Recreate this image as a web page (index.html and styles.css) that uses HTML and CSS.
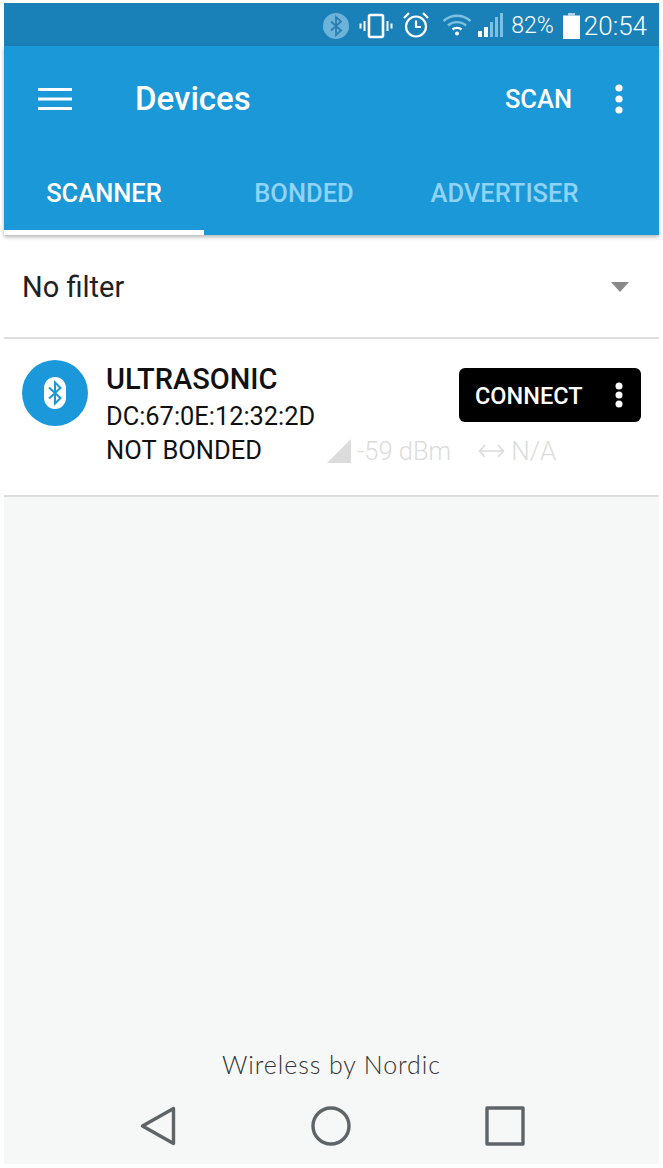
FILE: index.html
```html
<!DOCTYPE html>
<html lang="en">
<head>
<meta charset="utf-8">
<title>Devices</title>
<link rel="stylesheet" href="styles.css">
</head>
<body>
<div class="phone">
  <div class="status">
    <svg class="st-bt" viewBox="0 0 26 26"><circle cx="13" cy="13" r="13" fill="#6cb3d9"/><path d="M8 8.500l10 9-5 4.500V4l5 4.500-10 9" fill="none" stroke="#2a7fb0" stroke-width="1.800"/></svg>
    <svg class="st-vib" viewBox="0 0 34 26"><rect x="10" y="2" width="14" height="22" rx="1.500" fill="none" stroke="#fff" stroke-width="2.600"/><path d="M5.500 8v10M1.500 10.500v5M28.500 8v10M32.500 10.500v5" stroke="#fff" stroke-width="2"/></svg>
    <svg class="st-alarm" viewBox="0 0 28 28"><circle cx="14" cy="15.500" r="10" fill="none" stroke="#fff" stroke-width="2.200"/><path d="M14 9.500v6.500h5M2 7l5-5M26 7l-5-5" fill="none" stroke="#fff" stroke-width="2.200"/></svg>
    <svg class="st-wifi" viewBox="0 0 30 24"><g fill="none" stroke="#7cc0e3" stroke-width="2.400"><path d="M1.500 9C9 2 21 2 28.500 9"/><path d="M6 13.500c5-4.500 13-4.500 18 0"/></g><path d="M10.500 17.500c2.500-2.200 6.500-2.200 9 0" fill="none" stroke="#fff" stroke-width="2.400"/><circle cx="15" cy="21.500" r="2" fill="#fff"/></svg>
    <svg class="st-sig" viewBox="0 0 26 26"><path d="M1 19h4v6H1zM7 15h4v10H7z" fill="#fff"/><path d="M13 10h3v15h-3zM18 5h3v20h-3zM23 1h3v24h-3z" fill="#7cc0e3"/></svg>
    <span class="st-text st-pct">82%</span>
    <svg class="st-batt" viewBox="0 0 17 26"><path d="M5 0h7v2.500H5z" fill="#a9d3ea"/><path d="M0 2.500h17V26H0z" fill="#fff"/></svg>
    <span class="st-text st-time">20:54</span>
  </div>
  <header class="toolbar">
    <div class="bar">
      <svg class="menu" viewBox="0 0 34 24"><path d="M0 2.500h34M0 12h34M0 21.500h34" stroke="#fff" stroke-width="3"/></svg>
      <h1 class="title">Devices</h1>
      <span class="scan">SCAN</span>
      <svg class="dots" viewBox="0 0 8 30"><circle cx="4" cy="4" r="3.600"/><circle cx="4" cy="15" r="3.600"/><circle cx="4" cy="26" r="3.600"/></svg>
    </div>
    <nav class="tabs">
      <span class="tab active">SCANNER</span>
      <span class="tab">BONDED</span>
      <span class="tab">ADVERTISER</span>
    </nav>
  </header>
  <div class="filter">
    <span class="filter-text">No filter</span>
    <span class="caret"></span>
  </div>
  <section class="device">
    <div class="avatar">
      <svg viewBox="0 0 24 34"><rect x="1" y="1" width="22" height="32" rx="11" fill="#fff"/><path d="M6 11.500l11.500 10.500-5.500 5.500V6.500L17.500 12 6 22.500" fill="none" stroke="#1b98d9" stroke-width="2"/></svg>
    </div>
    <div class="info">
      <div class="name">ULTRASONIC</div>
      <div class="addr">DC:67:0E:12:32:2D</div>
      <div class="bond">NOT BONDED</div>
    </div>
    <div class="side">
      <div class="connect">
        <span class="connect-label">CONNECT</span>
        <svg class="connect-dots" viewBox="0 0 8 26"><circle cx="4" cy="4" r="3.500"/><circle cx="4" cy="13" r="3.500"/><circle cx="4" cy="22" r="3.500"/></svg>
      </div>
      <div class="meta">
        <svg class="rssi" viewBox="0 0 24 24"><path d="M24 0v24H0z" fill="#dcdcdc"/></svg>
        <span class="rssi-text">-59 dBm</span>
        <svg class="arrow" viewBox="0 0 27 16"><path d="M7 2L1.500 8 7 14M20 2l5.500 6L20 14M1.500 8h24" fill="none" stroke="#dcdcdc" stroke-width="1.700"/></svg>
        <span class="na">N/A</span>
      </div>
    </div>
  </section>
  <main class="empty">
    <div class="brand">Wireless by Nordic</div>
    <div class="nav">
      <svg class="nav-back" viewBox="0 0 36 40"><path d="M33.500 2.500v35L2.500 20z" fill="none" stroke="#5f6468" stroke-width="3.400" stroke-linejoin="round"/></svg>
      <svg class="nav-home" viewBox="0 0 40 40"><circle cx="20" cy="20" r="18" fill="none" stroke="#5f6468" stroke-width="3.400"/></svg>
      <svg class="nav-recent" viewBox="0 0 40 40"><rect x="2" y="2" width="36" height="36" fill="none" stroke="#5f6468" stroke-width="3.400" stroke-linejoin="round"/></svg>
    </div>
  </main>
</div>
</body>
</html>
```
FILE: styles.css
```css
* { box-sizing: border-box; }
html, body { margin: 0; height: 100%; background: #fff; }
body { padding: 3px 4px 4px; font-family: Roboto, "Liberation Sans", sans-serif; overflow: hidden; }
.phone { height: 1161px; display: flex; flex-direction: column; background: #f6f8f8; }

.status { height: 43px; flex: none; display: flex; align-items: center; justify-content: flex-end; padding: 2px 12px 0 0; background: #1a80b8; color: #fff; }
.status svg { flex: none; display: block; }
.st-bt { width: 26px; height: 26px; }
.st-vib { width: 34px; height: 26px; margin-left: 10px; }
.st-alarm { width: 28px; height: 28px; margin-left: 9px; margin-bottom: 2px; }
.st-wifi { width: 30px; height: 24px; margin-left: 12px; margin-bottom: 4px; }
.st-sig { width: 26px; height: 26px; margin-left: 5px; margin-bottom: 2px; }
.st-text { font-size: 24px; line-height: 28px; font-weight: 300; }
.st-pct { margin-left: 8px; font-size: 23px; }
.st-batt { width: 17px; height: 26px; margin-left: 9px; }
.st-time { margin-left: 4px; font-size: 26px; }

.toolbar { flex: none; height: 189px; background: #1b98d7; color: #fff; display: flex; flex-direction: column; box-shadow: 0 2px 4px rgba(0,0,0,.3); position: relative; }
.bar { height: 105px; display: flex; align-items: center; padding: 0 36px 0 34px; }
.menu { width: 34px; height: 24px; flex: none; }
.title { margin: 0 0 0 63px; font-size: 33px; font-weight: 500; line-height: 36px; flex: 1; }
.scan { font-size: 25.500px; font-weight: 500; margin-right: 43px; }
.dots { width: 8px; height: 30px; fill: #fff; }

.tabs { height: 84px; display: flex; }
.tab { width: 200px; height: 84px; padding-top: 26px; text-align: center; font-size: 25.500px; line-height: 32px; font-weight: 500; color: #8fd3f6; }
.tab:nth-child(3) { width: 201px; }
.tab.active { color: #fff; border-bottom: 5px solid #fff; }

.filter { flex: none; height: 104px; padding: 2px 30px 0 18px; display: flex; align-items: center; justify-content: space-between; background: #fff; border-bottom: 2px solid #dedede; }
.filter-text { font-size: 29px; color: #212121; }
.caret { width: 0; height: 0; border-left: 9px solid transparent; border-right: 9px solid transparent; border-top: 10px solid #8a8a8a; }

.device { flex: none; height: 158px; display: flex; background: #fff; border-bottom: 2px solid #dedede; padding: 21px 18px 0; }
.avatar { width: 66px; height: 66px; border-radius: 50%; background: #1b98d9; display: flex; align-items: center; justify-content: center; flex: none; }
.avatar svg { width: 24px; height: 34px; }
.info { margin-left: 18px; width: 231px; flex: none; color: #111; }
.name { font-size: 29px; font-weight: 500; line-height: 36px; margin-top: 1px; }
.addr { font-size: 25.400px; line-height: 38px; }
.bond { font-size: 25.500px; line-height: 30px; }
.side { flex: 1; display: flex; flex-direction: column; align-items: flex-end; }
.connect { width: 182px; height: 54px; margin-top: 8px; padding: 2px 18px 0 16px; background: #000; border-radius: 6px; color: #fff; display: flex; align-items: center; justify-content: space-between; }
.connect-label { font-size: 23.500px; font-weight: 500; }
.connect-dots { width: 8px; height: 26px; fill: #fff; margin-top: -2px; }
.meta { align-self: flex-start; margin-left: -10px; margin-top: 14px; display: flex; align-items: center; color: #dcdcdc; font-size: 25.500px; line-height: 30px; white-space: nowrap; }
.rssi { width: 24px; height: 24px; flex: none; }
.rssi-text { margin-left: 6px; font-weight: 300; }
.arrow { width: 27px; height: 16px; margin-left: 27px; flex: none; }
.na { margin-left: 6px; font-weight: 300; font-size: 26px; }

.empty { flex: 1; display: flex; flex-direction: column; justify-content: flex-end; padding-bottom: 18px; }
.brand { text-align: center; font-family: Lato, "Liberation Sans", sans-serif; font-size: 25px; font-weight: 300; line-height: 30px; letter-spacing: .9px; color: #333; margin: 0 0 27px; }
.nav { display: flex; align-items: center; height: 40px; padding-left: 136px; }
.nav-back { width: 36px; height: 40px; }
.nav-home { width: 40px; height: 40px; margin-left: 135px; }
.nav-recent { width: 40px; height: 40px; margin-left: 134px; }
```
